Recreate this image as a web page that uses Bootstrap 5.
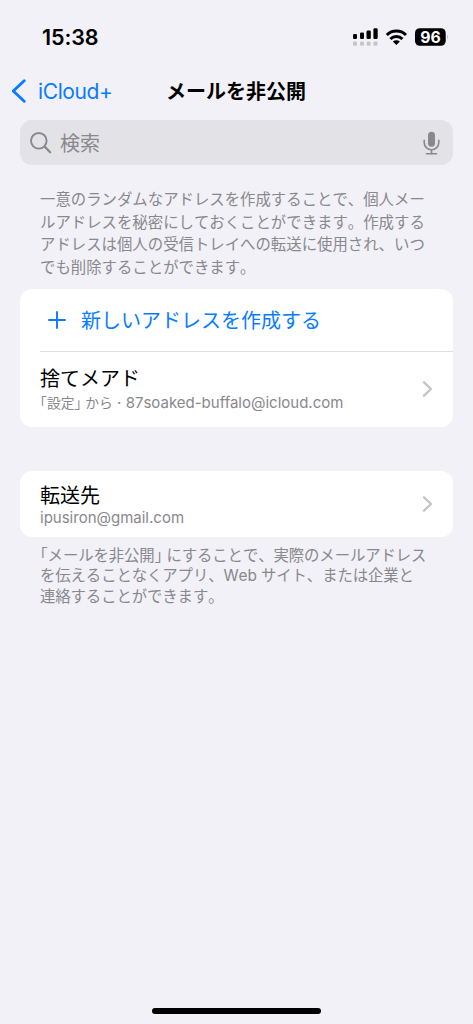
<!DOCTYPE html>
<html lang="ja">
<head>
<meta charset="utf-8">
<meta name="viewport" content="width=device-width, initial-scale=1">
<title>メールを非公開</title>
<link href="https://cdn.jsdelivr.net/npm/bootstrap@5.3.0/dist/css/bootstrap.min.css" rel="stylesheet">
<style>
  :root { --ios-blue: #087cff; --ios-gray: #88888d; }
  body { background: #f2f1f7; color: #000; font-family: Inter, "Noto Sans CJK JP", sans-serif; font-size: 20px; line-height: 1; overflow: hidden; }
  svg { display: block; flex: none; }
  .screen { height: 1024px; }
  .statusbar { height: 74px; padding: 0 25px 0 42px; }
  .clock { font-size: 21.5px; font-weight: 600; letter-spacing: -.1px; padding-top: 2px; }
  .topbar { height: 34px; padding-left: 11px; }
  .back { color: var(--ios-blue); font-size: 21px; letter-spacing: -.4px; width: 155px; }
  .page-title { font-size: 20px; font-weight: 700; padding-top: 2px; }
  .search { height: 45px; margin-top: 12px; border-radius: 12px; background: #e3e2e7; color: var(--ios-gray); padding: 0 13px 0 10px; }
  .search-hint { padding-top: 2px; }
  .intro, .note { color: var(--ios-gray); white-space: nowrap; font-size: 15.4px; font-kerning: none; margin: 0 0 0 20px; }
  .intro { line-height: 22.7px; padding-top: 24px; height: 123.5px; }
  .note { line-height: 20.4px; padding-top: 9px; letter-spacing: -.1px; }
  .panel { border: 0; border-radius: 12px; background: #fff; }
  .panel-forward { margin-top: 44px; }
  .create { height: 62px; color: var(--ios-blue); padding-left: 28px; }
  .create-text { margin-left: 15px; padding-top: 3px; }
  .rule { margin-left: 20px; height: 1px; background: #dfdfe1; }
  .entry { padding: 0 20px; }
  .entry-alias { height: 75.5px; }
  .entry-forward { height: 66px; }
  .name { line-height: 24px; }
  .detail { color: var(--ios-gray); font-size: 15px; line-height: 20px; white-space: nowrap; }
  .entry-alias .name { padding-top: 1px; }
  .entry-alias .detail { padding-top: 2px; }
  .entry-forward .name { padding-top: 5px; line-height: 23px; }
  .jp-small { font-size: 13.8px; }
  .half { font-feature-settings: "halt"; }
  .home-bar { width: 169px; height: 6px; border-radius: 3px; background: #000; margin-bottom: 10px; }
</style>
</head>
<body>
<div class="screen d-flex flex-column">
  <header>
    <div class="statusbar d-flex align-items-center justify-content-between">
      <div class="clock">15:38</div>
      <svg width="98" height="20" viewBox="0 0 98 20">
        <g><rect x="3" y="7" width="4" height="5" rx="1.3"/><rect x="10" y="5.6" width="4" height="6.4" rx="1.3"/><rect x="16.5" y="3.5" width="4.3" height="8.5" rx="1.3"/><rect x="23.4" y="1.3" width="4.3" height="10.7" rx="1.3"/></g>
        <g fill="#c5c4c9"><rect x="3" y="14.5" width="4" height="4.3" rx="1.3"/><rect x="10" y="14.5" width="4" height="4.3" rx="1.3"/><rect x="16.6" y="14.5" width="4" height="4.3" rx="1.3"/><rect x="23.5" y="14.5" width="4" height="4.3" rx="1.3"/></g>
        <g fill="none" stroke="#000" stroke-width="3"><path d="M36.8 8a13.8 13.8 0 0 1 19.2 0"/><path d="M40.4 12a8.6 8.6 0 0 1 12 0"/></g>
        <path d="M42.9 14.6a5.1 5.1 0 0 1 7 0l-3.5 3.5z"/>
        <rect x="65" y="1.2" width="30.7" height="17.6" rx="4.8"/>
        <path fill="#b9b8bd" d="M97 7.5q1.8 2.4 0 5z"/>
        <text x="80.4" y="15.7" text-anchor="middle" font-family="Inter" font-size="15.8" font-weight="700" fill="#fff">96</text>
      </svg>
    </div>
    <nav class="topbar d-flex align-items-center">
      <a class="back d-flex align-items-center text-decoration-none" href="#">
        <svg width="15" height="24" viewBox="0 0 15 24" fill="none" stroke="currentColor" stroke-width="2.9" stroke-linecap="round" stroke-linejoin="round"><path d="M13.2 1.8 2.3 12l10.9 10.2"/></svg>
        <span class="ms-2 ps-1">iCloud+</span>
      </a>
      <h1 class="page-title m-0">メールを非公開</h1>
    </nav>
  </header>
  <main class="px-3 mx-1">
    <div class="search d-flex align-items-center">
      <svg width="22" height="22" viewBox="0 0 22 22" fill="none" stroke="currentColor" stroke-linecap="round"><circle cx="8.8" cy="8.8" r="7.8" stroke-width="1.9"/><path d="m14.6 14.6 5.6 5.6" stroke-width="2.2"/></svg>
      <span class="search-hint ms-2 flex-grow-1">検索</span>
      <svg width="17" height="24" viewBox="0 0 17 24" fill="none" stroke="currentColor" stroke-width="1.6" stroke-linecap="round"><rect x="5" y=".8" width="7" height="15" rx="3.5" fill="currentColor" stroke="none"/><path d="M1.2 9.4v2.1a7.3 7.3 0 0 0 14.6 0V9.4M8.5 18.8v3.8M3.5 22.7h10"/></svg>
    </div>
    <p class="intro">一意のランダムなアドレスを作成することで、個人メー<br>ルアドレスを秘密にしておくことができます。作成する<br>アドレスは個人の受信トレイへの転送に使用され、いつ<br>でも削除することができます。</p>
    <section class="panel">
      <div class="create d-flex align-items-center">
        <svg width="18" height="18" viewBox="0 0 18 18" fill="none" stroke="currentColor" stroke-width="1.9" stroke-linecap="round"><path d="M9 1v16M1 9h16"/></svg>
        <span class="create-text">新しいアドレスを作成する</span>
      </div>
      <div class="rule"></div>
      <div class="entry entry-alias d-flex align-items-center justify-content-between">
        <div>
          <div class="name">捨てメアド</div>
          <div class="detail"><span class="jp-small half">「設定」</span><span class="jp-small"> から</span> · 87soaked-buffalo@icloud.com</div>
        </div>
        <svg width="11" height="16" viewBox="0 0 11 16" fill="none" stroke="#c4c4c6" stroke-width="2.3" stroke-linecap="round" stroke-linejoin="round"><path d="M2 1.3 9 8l-7 6.7"/></svg>
      </div>
    </section>
    <section class="panel panel-forward">
      <div class="entry entry-forward d-flex align-items-center justify-content-between">
        <div>
          <div class="name">転送先</div>
          <div class="detail">ipusiron@gmail.com</div>
        </div>
        <svg width="11" height="16" viewBox="0 0 11 16" fill="none" stroke="#c4c4c6" stroke-width="2.3" stroke-linecap="round" stroke-linejoin="round"><path d="M2 1.3 9 8l-7 6.7"/></svg>
      </div>
    </section>
    <p class="note"><span class="half">「メールを非公開」</span> にすることで、実際のメールアドレス<br>を伝えることなくアプリ、Web サイト、または企業と<br>連絡することができます。</p>
  </main>
  <div class="home-bar mt-auto mx-auto"></div>
</div>
<script src="https://cdn.jsdelivr.net/npm/bootstrap@5.3.0/dist/js/bootstrap.bundle.min.js"></script>
</body>
</html>
